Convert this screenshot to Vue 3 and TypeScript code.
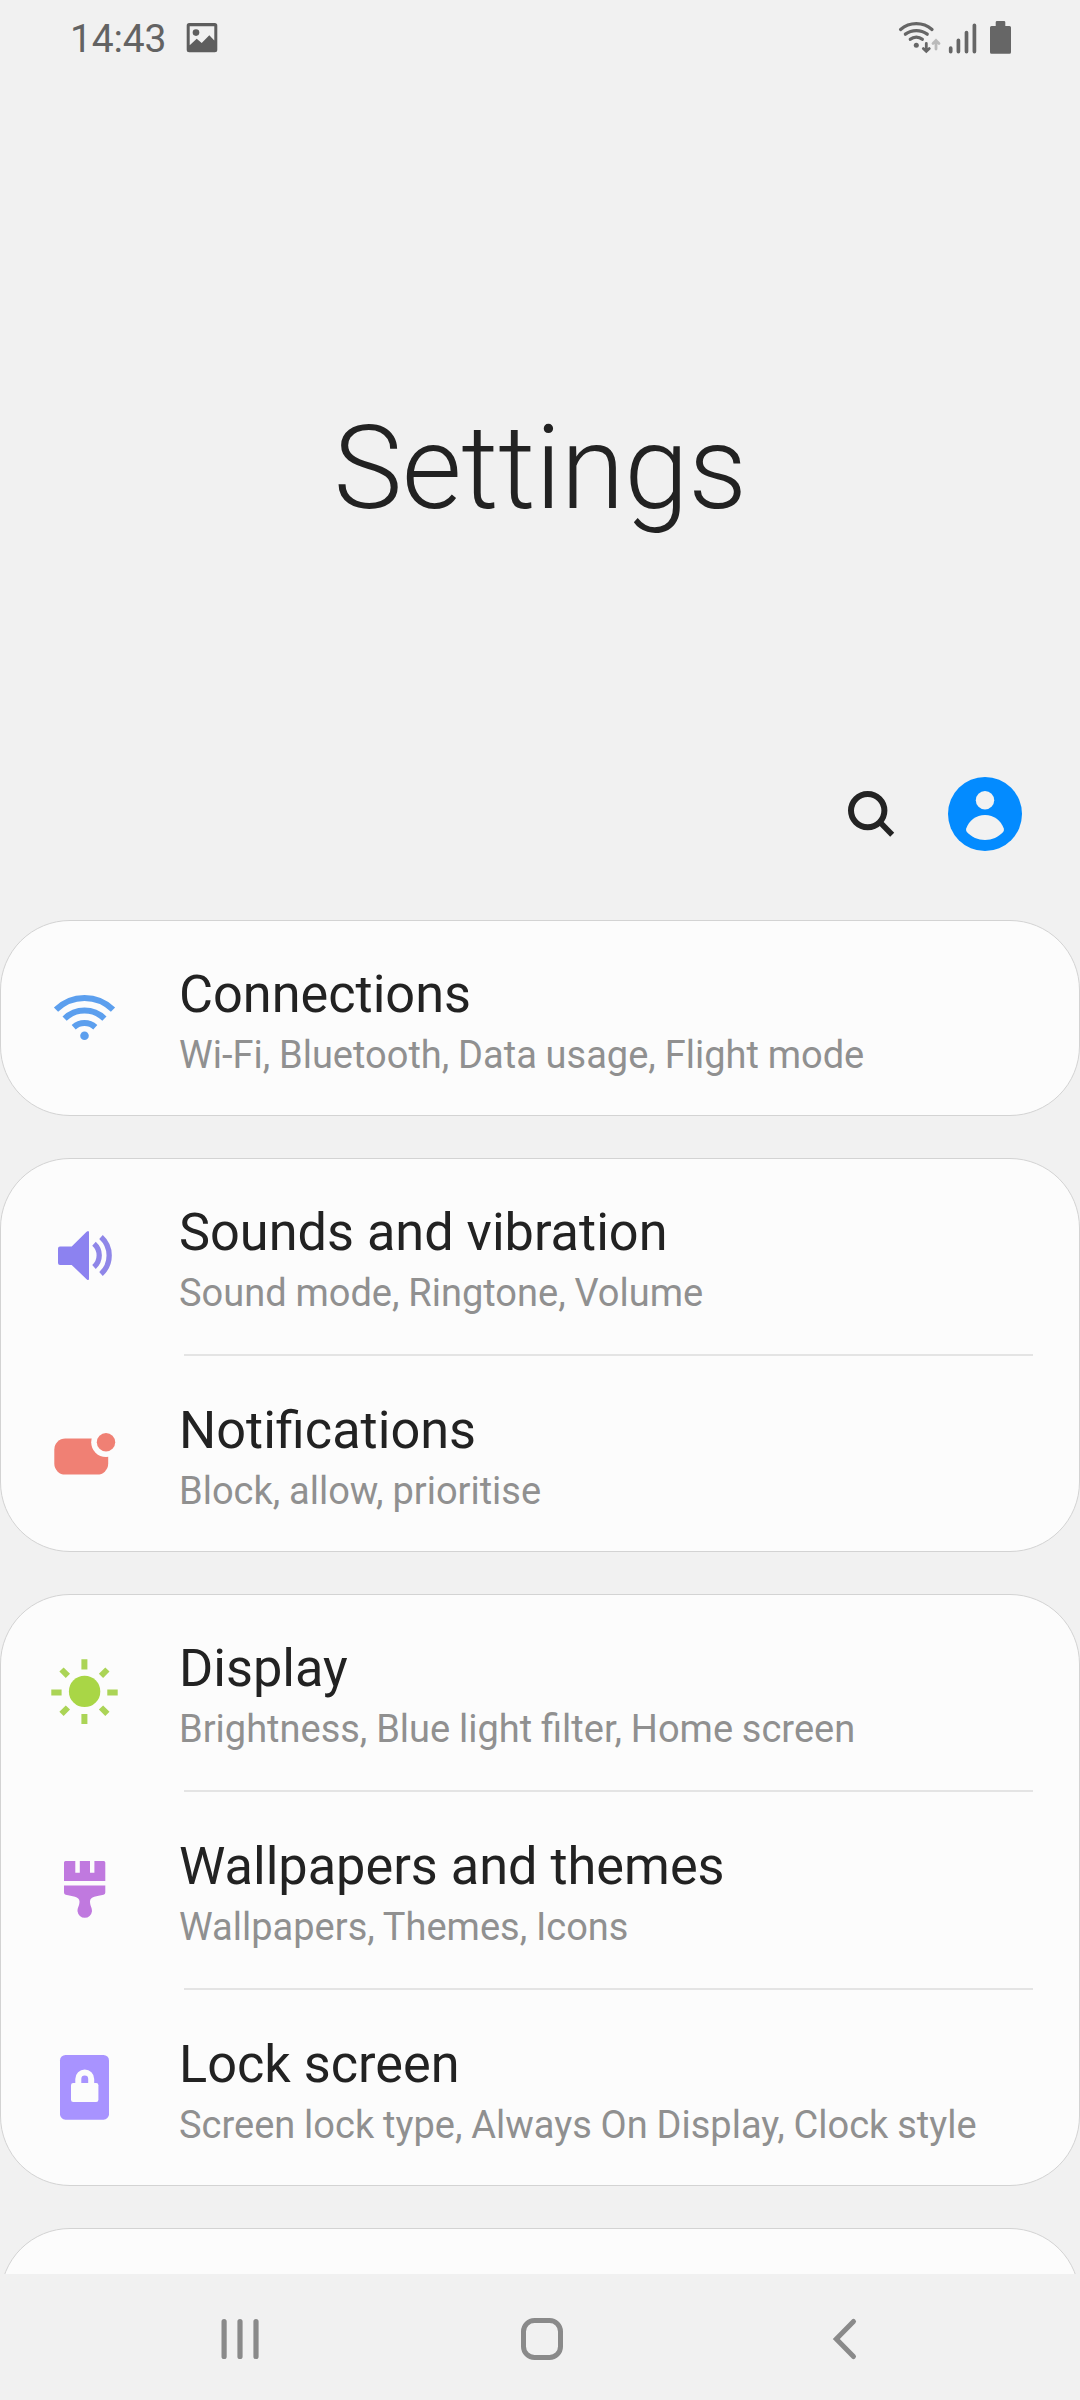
<script setup lang="ts">
type IconName = 'wifi' | 'sound' | 'notification' | 'sun' | 'brush' | 'lock'

interface SettingsItem {
  icon: IconName
  title: string
  summary: string
}

const groups: SettingsItem[][] = [
  [{ icon: 'wifi', title: 'Connections', summary: 'Wi-Fi, Bluetooth, Data usage, Flight mode' }],
  [
    { icon: 'sound', title: 'Sounds and vibration', summary: 'Sound mode, Ringtone, Volume' },
    { icon: 'notification', title: 'Notifications', summary: 'Block, allow, prioritise' },
  ],
  [
    { icon: 'sun', title: 'Display', summary: 'Brightness, Blue light filter, Home screen' },
    { icon: 'brush', title: 'Wallpapers and themes', summary: 'Wallpapers, Themes, Icons' },
    { icon: 'lock', title: 'Lock screen', summary: 'Screen lock type, Always On Display, Clock style' },
  ],
]
</script>

<template>
  <div class="screen">
    <header class="status">
      <span class="time">14:43</span>
      <svg class="picture" width="32" height="32" viewBox="186 22 32 32" fill="#5e5e5e">
        <path fill-rule="evenodd" d="M189.200 23H214.800Q217.300 23 217.300 25.500V49.800Q217.300 52.300 214.800 52.300H189.200Q186.700 52.300 186.700 49.800V25.500Q186.700 23 189.200 23ZM189.700 26.300V45.300L196.700 38.800L201.700 43L209.300 35.200L214.300 40.600V26.300Z" />
        <circle cx="196" cy="32.600" r="3.300" />
      </svg>
      <svg class="indicators" width="116" height="40" viewBox="898 18 116 40" fill="none" stroke="#666" stroke-width="3.300" stroke-linecap="round">
        <path d="M900.600 29.400A24 24 0 0 1 932 29.400M905.400 34.200A18.500 18.500 0 0 1 927.200 34.200M910.300 39.300A9.200 9.200 0 0 1 922.300 39.300" />
        <circle cx="916.300" cy="45.200" r="2.500" fill="#666" stroke="none" />
        <path d="M926.300 43.500V50.500M923.300 48.600L926.300 51.400L929.300 48.600" stroke-width="2.800" />
        <path d="M936 49V41.500M933 43.400L936 40.400L939 43.400" stroke="#bababa" stroke-width="2.800" />
        <path d="M950.700 48.200V51.600M958.400 40.300V51.600M966.500 32.500V51.600M974.400 25.300V51.600" stroke-width="3.700" />
        <path d="M997 21H1004Q1005.300 21 1005.300 22.300V26H1009.500Q1011 26 1011 27.500V52.200Q1011 53.700 1009.500 53.700H991.500Q990 53.700 990 52.200V27.500Q990 26 991.500 26H995.700V22.300Q995.700 21 997 21Z" fill="#666" stroke="none" />
      </svg>
    </header>

    <h1 class="heading">Settings</h1>

    <div class="actions">
      <svg width="60" height="60" viewBox="840 784 60 60" fill="none" stroke="#232323">
        <circle cx="867.700" cy="810.600" r="16.700" stroke-width="6" />
        <path d="M880 822.300L892.200 834.800" stroke-width="5.600" />
      </svg>
      <svg width="76" height="76" viewBox="947 776 76 76">
        <circle cx="985" cy="814" r="37" fill="#038bff" />
        <circle cx="985" cy="800.200" r="9.200" fill="#f2f2f2" />
        <path d="M966.200 828.600C969 820.500 976 815 985 815S1001 820.500 1003.800 828.600Q1004.400 830.500 1003.200 832C998.500 837 992 840 985 840S971.500 837 966.800 832Q965.600 830.500 966.200 828.600Z" fill="#f2f2f2" />
      </svg>
    </div>

    <main class="list">
      <section v-for="(group, g) in groups" :key="g" class="card">
        <div v-for="item in group" :key="item.title" class="row">
          <svg class="icon" width="80" height="80" viewBox="44 58 80 80">
            <g v-if="item.icon === 'wifi'" fill="none" stroke="#5c9fee" stroke-width="6">
              <path d="M56 89.700A40.500 40.500 0 0 1 113 89.700M64.600 98.700A28.500 28.500 0 0 1 104.400 98.700M73.700 107.300A16 16 0 0 1 95.300 107.300" />
              <circle cx="84.500" cy="115.700" r="4.300" fill="#5c9fee" stroke="none" />
            </g>
            <g v-else-if="item.icon === 'sound'" fill="none" stroke="#8f86e8" stroke-width="5.300">
              <path d="M60 88.500H71.700L86.600 73.800Q89 71.800 89 74.500V120.500Q89 123.200 86.600 121.200L71.700 107H60Q58 107 58 105V90.500Q58 88.500 60 88.500Z" fill="#8c82f0" stroke="none" />
              <path d="M94 85.700A15.600 15.600 0 0 1 94 109M101 79A25 25 0 0 1 101 116" />
            </g>
            <g v-else-if="item.icon === 'notification'" fill="#f08074">
              <rect x="54.300" y="82.600" width="53.900" height="36" rx="11" />
              <circle cx="106" cy="86.300" r="14.800" fill="#fcfcfc" />
              <circle cx="106" cy="86.300" r="9.200" />
            </g>
            <g v-else-if="item.icon === 'sun'" fill="#a9d646" stroke="#abd456" stroke-width="6">
              <circle cx="84.600" cy="97.400" r="15.700" stroke="none" />
              <path d="M84.400 65.300V75.400M84.400 120V130M51.300 98.600H61.600M107.300 98.600H117.700M61.500 75.500L67.900 81.900M107.400 75.500L101 81.900M61.500 119.900L67.900 113.500M107.400 119.900L101 113.500" />
            </g>
            <g v-else-if="item.icon === 'brush'" fill="#c079df">
              <path d="M65.500 69H75.300V80.700H79.800V69H90V80.700H94.400V69H103.800Q105.300 69 105.300 70.500V89H64V70.500Q64 69 65.500 69Z" />
              <path d="M64 93.600H105.300V100.500Q105.300 102.300 103.500 102.800C97 104.500 90 104.500 90 109.500C90 114 92 115 92 119.300A7.300 7.300 0 0 1 77.500 119.300C77.500 115 79.500 114 79.500 109.500C79.500 104.500 72 104.500 65.700 102.800Q64 102.300 64 100.500Z" />
            </g>
            <g v-else>
              <rect x="60" y="65" width="49" height="64.700" rx="5.500" fill="#a893ff" />
              <rect x="71" y="93" width="27.400" height="19" rx="2.200" fill="#fcfcfc" />
              <path d="M78.300 95V89A6.450 6.450 0 0 1 91.200 89V95" fill="none" stroke="#fcfcfc" stroke-width="6" />
            </g>
          </svg>
          <div class="copy">
            <div class="title">{{ item.title }}</div>
            <div class="summary">{{ item.summary }}</div>
          </div>
        </div>
      </section>
      <section class="card next"></section>
    </main>

    <nav class="nav">
      <svg width="50" height="50" viewBox="215 2314 50 50" fill="none" stroke="#8a8a8a" stroke-width="5.200" stroke-linecap="round">
        <path d="M224.100 2321.600V2356.400M240 2321.600V2356.400M256 2321.600V2356.400" />
      </svg>
      <svg width="50" height="50" viewBox="517 2314 50 50" fill="none" stroke="#8a8a8a" stroke-width="5">
        <rect x="523.500" y="2320.500" width="37" height="37" rx="11" />
      </svg>
      <svg width="50" height="50" viewBox="819 2314 50 50" fill="none" stroke="#8a8a8a" stroke-width="5" stroke-linecap="round">
        <path d="M853.500 2321.500L836.300 2339L853.500 2356.500" />
      </svg>
    </nav>
  </div>
</template>

<style>
body {
  background: #f1f1f1;
}
</style>

<style scoped>
.screen {
  box-sizing: border-box;
  display: flex;
  flex-direction: column;
  width: 1080px;
  height: 2400px;
  overflow: hidden;
  background: #f1f1f1;
  color: #222;
  font-family: Roboto, 'Liberation Sans', sans-serif;
}

svg {
  display: block;
  flex: none;
}

.status {
  display: flex;
  flex: none;
  align-items: center;
  height: 76px;
  padding: 0 66px 0 70px;
}

.time {
  width: 116px;
  padding-top: 2px;
  color: #636363;
  font-size: 39px;
  letter-spacing: -0.2px;
  line-height: 50px;
}

.indicators {
  margin-left: auto;
}

.heading {
  flex: none;
  height: 700px;
  margin: 0;
  font-size: 116px;
  font-weight: 300;
  letter-spacing: -0.4px;
  line-height: 784px;
  text-align: center;
}

.actions {
  display: flex;
  flex: none;
  justify-content: flex-end;
  align-items: center;
  gap: 47px;
  height: 76px;
  padding-right: 57px;
}

.list {
  box-sizing: border-box;
  display: flex;
  flex: none;
  flex-direction: column;
  gap: 42px;
  height: 1422px;
  padding-top: 68px;
  overflow: hidden;
}

.card {
  box-sizing: border-box;
  flex: none;
  border: 1px solid #d3d3d3;
  border-radius: 70px;
  background: #fcfcfc;
}

.next {
  height: 196px;
}

.row {
  box-sizing: border-box;
  display: flex;
  height: 196px;
  padding: 43px 45px 0 43px;
}

.row:first-child,
.row:last-child {
  height: 195px;
}

.row:only-child {
  height: 194px;
}

.row + .row {
  position: relative;
  height: 198px;
  padding-top: 46px;
}

.row + .row:last-child {
  height: 197px;
}

.row + .row::before {
  content: '';
  position: absolute;
  top: 0;
  left: 183px;
  right: 46px;
  height: 2px;
  background: #e4e4e4;
}

.icon {
  margin-top: 14px;
}

.copy {
  margin-left: 55px;
  white-space: nowrap;
}

.title {
  padding-top: 1px;
  font-size: 52.25px;
  line-height: 60px;
}

.summary {
  margin-top: 7px;
  color: #909090;
  font-size: 38px;
  word-spacing: -0.6px;
  line-height: 46px;
}

.nav {
  display: grid;
  flex: none;
  grid-template-columns: repeat(3, 302px);
  justify-items: center;
  align-items: center;
  height: 126px;
  padding: 4px 0 0 89px;
  box-sizing: border-box;
}
</style>
